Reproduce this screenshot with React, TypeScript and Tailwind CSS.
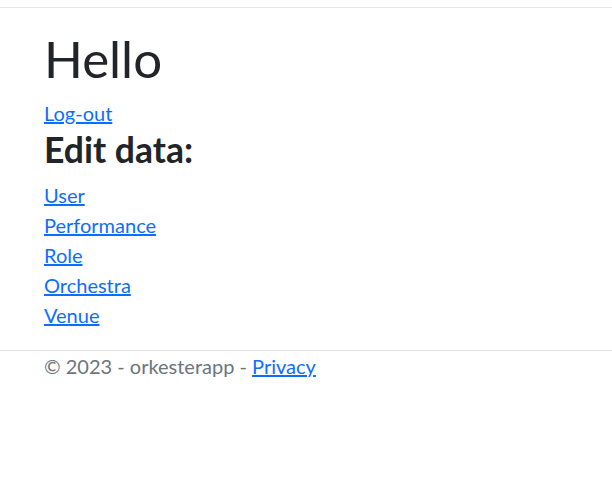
export default function App() {
  const links = ["User", "Performance", "Role", "Orchestra", "Venue"];
  return (
    <div className="w-[612px] h-[484px] bg-white font-['Lato',sans-serif]">
      <div className="h-[8px] border-b border-[#e5e5e5]" />
      <div className="pl-[44px]">
        <h1 className="mt-[20px] text-[51px] leading-[62px] text-[#212529] font-normal">Hello</h1>
        <a href="#" className="block w-fit mt-[8px] text-[20px] leading-[30px] text-[#0d6efd] underline decoration-[1.5px]">Log-out</a>
        <h2 className="mt-[1px] text-[35.5px] leading-[42px] text-[#212529] font-bold">Edit data:</h2>
        <div className="mt-[9px] flex flex-col">
          {links.map((l) => (
            <a key={l} href="#" className="text-[20px] leading-[30px] text-[#0d6efd] underline decoration-[1.5px] w-fit">{l}</a>
          ))}
        </div>
      </div>
      <footer className="mt-[20px] border-t border-[#dee2e6] pl-[44px] text-[20px] leading-[30px] text-[#6c757d]">
        © 2023 - orkesterapp - <a href="#" className="text-[#0d6efd] underline decoration-[1.5px]">Privacy</a>
      </footer>
    </div>
  );
}
